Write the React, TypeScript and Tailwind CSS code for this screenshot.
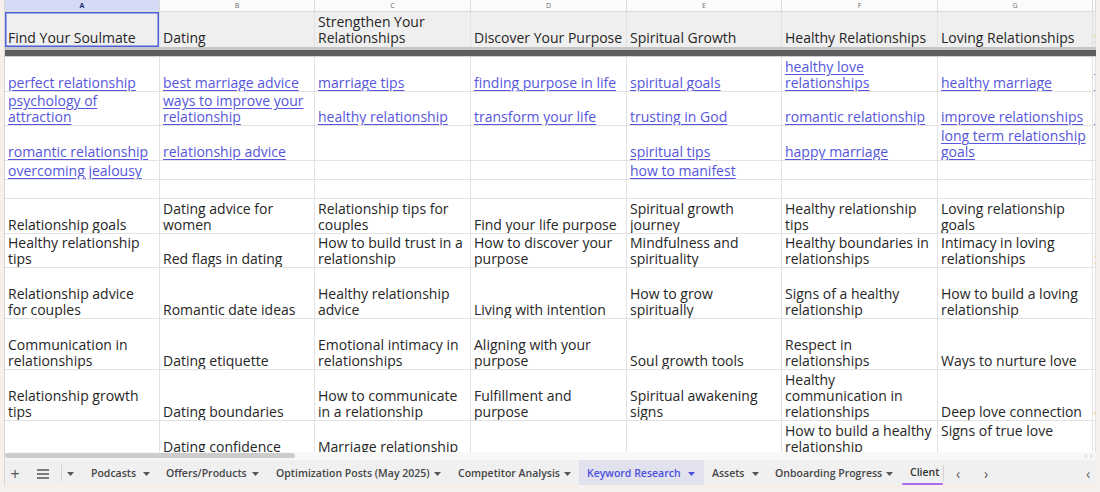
import React from "react";

type Cell = string[] | null;
type Row = { h: string; link?: boolean; cells: Cell[] };

const W = ["w-[155px]", "w-[155px]", "w-[156px]", "w-[156px]", "w-[155px]", "w-[156px]", "w-[155px]"];
const LINK = "text-[#5656dc] underline decoration-[#5656dc] underline-offset-[2px]";

const rows: Row[] = [
  {
    h: "h-[35px]",
    link: true,
    cells: [
      ["perfect relationship"],
      ["best marriage advice"],
      ["marriage tips"],
      ["finding purpose in life"],
      ["spiritual goals"],
      ["healthy love", "relationships"],
      ["healthy marriage"],
      ["h", "h"],
    ],
  },
  {
    h: "h-[34px]",
    link: true,
    cells: [
      ["psychology of", "attraction"],
      ["ways to improve your", "relationship"],
      ["healthy relationship"],
      ["transform your life"],
      ["trusting in God"],
      ["romantic relationship"],
      ["improve relationships"],
      ["h"],
    ],
  },
  {
    h: "h-[35px]",
    link: true,
    cells: [
      ["romantic relationship"],
      ["relationship advice"],
      null,
      null,
      ["spiritual tips"],
      ["happy marriage"],
      ["long term relationship", "goals"],
      null,
    ],
  },
  {
    h: "h-[19px]",
    link: true,
    cells: [["overcoming jealousy"], null, null, null, ["how to manifest"], null, null, null],
  },
  { h: "h-[19px]", cells: [null, null, null, null, null, null, null, null] },
  {
    h: "h-[35px]",
    cells: [
      ["Relationship goals"],
      ["Dating advice for", "women"],
      ["Relationship tips for", "couples"],
      ["Find your life purpose"],
      ["Spiritual growth", "journey"],
      ["Healthy relationship", "tips"],
      ["Loving relationship", "goals"],
      null,
    ],
  },
  {
    h: "h-[34px]",
    cells: [
      ["Healthy relationship", "tips"],
      ["Red flags in dating"],
      ["How to build trust in a", "relationship"],
      ["How to discover your", "purpose"],
      ["Mindfulness and", "spirituality"],
      ["Healthy boundaries in", "relationships"],
      ["Intimacy in loving", "relationships"],
      ["S"],
    ],
  },
  {
    h: "h-[51px]",
    cells: [
      ["Relationship advice", "for couples"],
      ["Romantic date ideas"],
      ["Healthy relationship", "advice"],
      ["Living with intention"],
      ["How to grow", "spiritually"],
      ["Signs of a healthy", "relationship"],
      ["How to build a loving", "relationship"],
      null,
    ],
  },
  {
    h: "h-[51px]",
    cells: [
      ["Communication in", "relationships"],
      ["Dating etiquette"],
      ["Emotional intimacy in", "relationships"],
      ["Aligning with your", "purpose"],
      ["Soul growth tools"],
      ["Respect in", "relationships"],
      ["Ways to nurture love"],
      null,
    ],
  },
  {
    h: "h-[51px]",
    cells: [
      ["Relationship growth", "tips"],
      ["Dating boundaries"],
      ["How to communicate", "in a relationship"],
      ["Fulfillment and", "purpose"],
      ["Spiritual awakening", "signs"],
      ["Healthy", "communication in", "relationships"],
      ["Deep love connection"],
      ["c"],
    ],
  },
  {
    h: "h-[35px]",
    cells: [
      null,
      ["Dating confidence"],
      ["Marriage relationship"],
      null,
      null,
      ["How to build a healthy", "relationship"],
      ["Signs of true love", ""],
      null,
    ],
  },
];

const headers: string[][] = [
  ["Find Your Soulmate"],
  ["Dating"],
  ["Strengthen Your", "Relationships"],
  ["Discover Your Purpose"],
  ["Spiritual Growth"],
  ["Healthy Relationships"],
  ["Loving Relationships"],
  ["S"],
];

function CellView({ idx, lines, link, header }: { idx: number; lines: Cell; link?: boolean; header?: boolean }) {
  const w = idx < 7 ? W[idx] : "flex-1 min-w-0";
  const pad = idx < 7 ? "pl-[3px]" : "pl-[1px]";
  const selected = header && idx === 0 ? "shadow-[inset_0_0_0_1.5px_#4f60dc]" : "";
  return (
    <div
      className={`${w} ${pad} ${selected} shrink-0 h-full border-r border-[#e2e2e2] flex flex-col justify-end ${header ? "pb-[1px]" : "pb-0"} overflow-hidden`}
    >
      {lines?.map((l, i) => (
        <div key={i} className={`whitespace-nowrap leading-[16px] h-[16px] ${link ? LINK : "text-[#262626]"}`}>
          {l || "\u00a0"}
        </div>
      ))}
    </div>
  );
}

function Caret({ color = "#555" }: { color?: string }) {
  return (
    <svg width="7" height="4" viewBox="0 0 7 4" className="shrink-0">
      <path d="M0 0h7L3.5 4z" fill={color} />
    </svg>
  );
}

export default function App() {
  const letters = ["A", "B", "C", "D", "E", "F", "G", ""];
  return (
    <div className="w-[1100px] h-[492px] bg-[#f5f0ec] overflow-hidden font-['Open_Sans','Noto_Sans',sans-serif]">
      <div className="ml-[4px] w-[1092px] h-[485px] bg-white border-l border-[#d5d5d5] flex flex-col overflow-hidden">
        {/* grid */}
        <div className="h-[452px] overflow-hidden flex flex-col text-[14px]">
          {/* letters */}
          <div className="flex h-[12px] shrink-0 border-b border-[#dcdcdc]">
            {letters.map((l, i) => (
              <div
                key={i}
                className={`${i < 7 ? W[i] : "flex-1"} shrink-0 h-full border-r border-[#dcdcdc] flex items-center justify-center text-[7px] leading-none ${
                  i === 0 ? "bg-[#d5daf6] text-[#1f2a6b] font-bold" : "bg-[#fbfbfb] text-[#6b6b6b]"
                }`}
              >
                {l}
              </div>
            ))}
          </div>
          {/* header row */}
          <div className="flex h-[35px] shrink-0 bg-[#efefef]">
            {headers.map((c, i) => (
              <CellView key={i} idx={i} lines={c} header />
            ))}
          </div>
          {/* freeze bar */}
          <div className="h-[3px] bg-[#c6c6c6] shrink-0" />
          <div className="h-[6px] bg-[#5e5e5e] shrink-0" />
          <div className="h-[1px] bg-[#cfcfcf] shrink-0" />
          {rows.map((r, ri) => (
            <div key={ri} className={`flex ${r.h} shrink-0 border-b border-[#e2e2e2]`}>
              {r.cells.map((c, i) => (
                <CellView key={i} idx={i} lines={c} link={r.link} />
              ))}
            </div>
          ))}
        </div>
        {/* scrollbar */}
        <div className="h-[8px] shrink-0 bg-[#f7f7f7] flex items-start">
          <div className="mt-[1px] h-[5px] w-[290px] rounded-full bg-[#cccccc]" />
          <div className="ml-auto mr-[4px] flex gap-[3px] text-[7px] leading-[7px] text-[#b0b0b0]">
            <span>‹</span>
            <span>›</span>
          </div>
        </div>
        {/* tab bar */}
        <div className="h-[25px] shrink-0 bg-[#f0f0f1] flex items-stretch text-[10.5px] font-semibold text-[#454545]">
          <div className="w-[20px] pt-[2px] flex items-center justify-center text-[16px] font-normal text-[#555]">+</div>
          <div className="ml-[8px] w-[20px] pt-[2px] flex items-center justify-center">
            <svg width="12" height="10" viewBox="0 0 12 10">
              <path d="M0 1h12M0 5h12M0 9h12" stroke="#555" strokeWidth="1.4" />
            </svg>
          </div>
          <div className="ml-[8px] w-px h-[16px] mt-[5px] bg-[#d2d2d2]" />
          <div className="w-[16px] pt-[2px] flex items-center justify-center">
            <Caret />
          </div>
          <div className="ml-[5px] w-[75px] pt-[2px] flex items-center pl-[8px]">
            <span className="w-[52px] whitespace-nowrap">Podcasts</span>
            <Caret />
          </div>
          <div className="w-[110px] pt-[2px] flex items-center pl-[8px]">
            <span className="w-[86px] whitespace-nowrap">Offers/Products</span>
            <Caret />
          </div>
          <div className="w-[182px] pt-[2px] flex items-center pl-[8px]">
            <span className="w-[158px] whitespace-nowrap">Optimization Posts (May 2025)</span>
            <Caret />
          </div>
          <div className="w-[129px] pt-[2px] flex items-center pl-[8px]">
            <span className="w-[106px] whitespace-nowrap">Competitor Analysis</span>
            <Caret />
          </div>
          <div className="w-[125px] pt-[2px] flex items-center pl-[8px] bg-[#e1e2ee] text-[#4b4fdc]">
            <span className="w-[101px] whitespace-nowrap">Keyword Research</span>
            <Caret color="#4b4fdc" />
          </div>
          <div className="w-[63px] pt-[2px] flex items-center pl-[8px]">
            <span className="w-[40px] whitespace-nowrap">Assets</span>
            <Caret />
          </div>
          <div className="w-[135px] pt-[2px] flex items-center pl-[8px]">
            <span className="w-[111px] whitespace-nowrap">Onboarding Progress</span>
            <Caret />
          </div>
          <div className="w-[41px] flex flex-col">
            <div className="flex-1 pt-[2px] flex items-center pl-[8px] text-[#333]">Client</div>
            <div className="h-[2px] bg-[#a96cf0] rounded-full" />
          </div>
          <div className="w-px h-[16px] mt-[5px] bg-[#d2d2d2]" />
          <div className="ml-[6px] w-[16px] pt-[2px] flex items-center justify-center text-[14px] font-normal text-[#555]">‹</div>
          <div className="ml-[12px] w-[16px] pt-[2px] flex items-center justify-center text-[14px] font-normal text-[#555]">›</div>
          <div className="ml-auto w-[16px] pt-[2px] flex items-center justify-center text-[14px] font-normal text-[#666]">‹</div>
        </div>
      </div>
    </div>
  );
}
